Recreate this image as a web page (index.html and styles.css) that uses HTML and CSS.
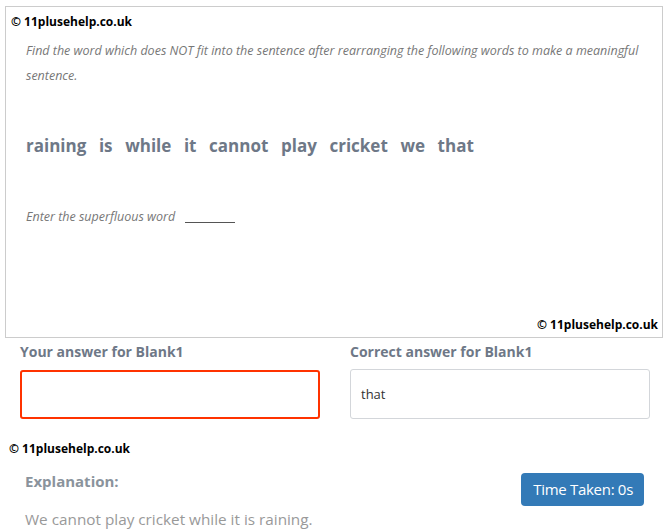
FILE: index.html
```html
<!DOCTYPE html>
<html>
<head>
<meta charset="utf-8">
<link rel="stylesheet" href="styles.css">
</head>
<body>
<div class="question">
  <div class="copy">© 11plusehelp.co.uk</div>
  <p class="instr">Find the word which does NOT fit into the sentence after rearranging the following words to make a meaningful sentence.</p>
  <div class="words">
    <span>raining</span><span>is</span><span>while</span><span>it</span><span>cannot</span><span>play</span><span>cricket</span><span>we</span><span>that</span>
  </div>
  <p class="enter">Enter the superfluous word <span class="blank"></span></p>
  <div class="copy copy-right">© 11plusehelp.co.uk</div>
</div>
<div class="answers">
  <div class="col">
    <div class="label">Your answer for Blank1</div>
    <div class="box box-wrong"></div>
  </div>
  <div class="col">
    <div class="label">Correct answer for Blank1</div>
    <div class="box">that</div>
  </div>
</div>
<div class="copy copy-bottom">© 11plusehelp.co.uk</div>
<div class="explain">
  <div class="explain-head">
    <div class="explain-title">Explanation:</div>
    <div class="time">Time Taken: 0s</div>
  </div>
  <div class="explain-text">We cannot play cricket while it is raining.</div>
</div>
</body>
</html>
```
FILE: styles.css
```css
html, body {
  margin: 0;
  padding: 0;
  background: #fff;
  font-family: "Open Sans", "Liberation Sans", sans-serif;
}
.question {
  margin: 6px 0 0 5px;
  width: 656px;
  height: 330px;
  border: 1px solid #cccccc;
  display: flex;
  flex-direction: column;
}
.copy {
  font-size: 12px;
  font-weight: 700;
  color: #000;
  line-height: 16px;
}
.question > .copy:first-child {
  margin: 7px 0 0 5px;
}
.instr {
  margin: 8px 14px 0 20px;
  font-size: 12.5px;
  font-style: italic;
  color: #777;
  line-height: 25px;
}
.words {
  margin: 46px 0 0 20px;
  display: flex;
  gap: 12.6px;
  font-size: 17px;
  font-weight: 700;
  color: #6e7887;
  line-height: 24px;
}
.enter {
  margin: 49px 0 0 20px;
  font-size: 12.5px;
  font-style: italic;
  color: #777;
  line-height: 20px;
}
.blank {
  display: inline-block;
  width: 50px;
  border-bottom: 1px solid #555;
  margin-left: 7px;
  vertical-align: -2px;
}
.copy-right {
  margin-top: auto;
  align-self: flex-end;
  margin-right: 4px;
  margin-bottom: 4px;
}
.answers {
  display: flex;
  gap: 30px;
  padding: 4px 0 0 20px;
}
.col {
  width: 300px;
}
.label {
  font-size: 14px;
  font-weight: 700;
  color: #6e7887;
  line-height: 20px;
}
.box {
  margin-top: 7px;
  height: 50px;
  box-sizing: border-box;
  border: 1px solid #d3d6da;
  border-radius: 3px;
  padding: 0 10px;
  display: flex;
  align-items: center;
  font-size: 13px;
  color: #333;
}
.box-wrong {
  margin-top: 8px;
  border: 2px solid #ff3300;
  height: 49px;
}
.copy-bottom {
  margin: 22px 0 0 9px;
}
.explain {
  padding: 0 26px 0 25px;
}
.explain-head {
  display: flex;
  justify-content: space-between;
  align-items: flex-start;
  margin-top: 13px;
}
.explain-title {
  font-size: 15px;
  font-weight: 700;
  color: #8a939c;
  line-height: 22px;
}
.time {
  margin-top: 3px;
  background: #337ab7;
  color: #fff;
  font-size: 15px;
  letter-spacing: -0.3px;
  border-radius: 4px;
  padding: 0 11px 0 12px;
  height: 33px;
  line-height: 33px;
}
.explain-text {
  margin-top: 2px;
  font-size: 15.3px;
  color: #999;
  line-height: 22px;
}
```
